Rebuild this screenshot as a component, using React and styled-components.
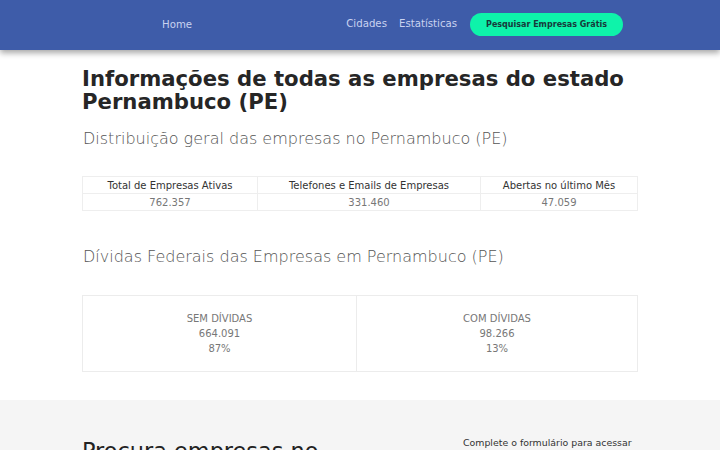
import React from "react";
import styled, { createGlobalStyle } from "styled-components";

const Global = createGlobalStyle`
  html, body { margin: 0; padding: 0; background: #fff; }
  body { font-family: "DejaVu Sans", sans-serif; color: #222; }
  * { box-sizing: border-box; }
`;

const Header = styled.header`
  height: 50px;
  background: #3e5ca9;
  box-shadow: 0 3px 6px rgba(0,0,0,0.35);
  display: flex;
  align-items: center;
  justify-content: space-between;
  padding: 0 97px 4px 162px;
  position: relative;
  z-index: 1;
`;

const NavLink = styled.a`
  color: #c9d3f0;
  font-size: 10.2px;
  text-decoration: none;
  margin-top: ${(p) => p.$mt || 0}px;
`;

const NavRight = styled.div`
  display: flex;
  align-items: center;
  gap: 12px;
`;

const CTA = styled.a`
  background: #0ef3aa;
  color: #173a3a;
  font-weight: bold;
  font-size: 8px;
  border-radius: 12px;
  height: 23px;
  padding: 0 16px;
  margin-left: 1px;
  display: flex;
  align-items: center;
  text-decoration: none;
  margin-top: 3px;
`;

const Main = styled.main`
  width: 556px;
  margin: 0 auto;
  padding-top: 17px;
`;

const Title = styled.h1`
  font-size: 21.2px;
  line-height: 23px;
  font-weight: bold;
  color: #262626;
  margin: 0;
`;

const Subtitle = styled.h2`
  font-size: 16px;
  font-weight: 200;
  color: #555;
  margin: ${(p) => p.$mt || 0}px 0 0 1px;
  line-height: 22px;
`;

const Table = styled.table`
  width: 100%;
  border-collapse: collapse;
  margin-top: 26px;
  font-size: 10px;
  text-align: center;
`;

const Th = styled.th`
  font-weight: normal;
  color: #333;
  border: 1px solid #eee;
  height: 17px;
  padding: 0;
`;

const Td = styled.td`
  color: #777;
  border: 1px solid #eee;
  height: 17px;
  padding: 0;
`;

const DebtGrid = styled.div`
  display: grid;
  grid-template-columns: 273px 1fr;
  border: 1px solid #ececec;
  margin-top: 27px;
  height: 77px;
`;

const DebtCell = styled.div`
  display: flex;
  flex-direction: column;
  align-items: center;
  justify-content: center;
  font-size: 10px;
  line-height: 15px;
  color: #777;
  & + & { border-left: 1px solid #ececec; }
`;

const Gray = styled.section`
  background: #f5f5f5;
  margin-top: 28px;
  height: 60px;
  overflow: hidden;
`;

const GrayInner = styled.div`
  width: 556px;
  margin: 0 auto;
  display: grid;
  grid-template-columns: 380px 1fr;
  padding-top: 37px;
`;

const BigHeading = styled.h2`
  font-size: 22.4px;
  font-weight: normal;
  color: #222;
  margin: 0;
  line-height: 28px;
`;

const SideText = styled.p`
  font-size: 9.4px;
  color: #333;
  margin: 0 0 0 1px;
`;

export default function App() {
  return (
    <>
      <Global />
      <Header>
        <NavLink $mt={2}>Home</NavLink>
        <NavRight>
          <NavLink>Cidades</NavLink>
          <NavLink>Estatísticas</NavLink>
          <CTA>Pesquisar Empresas Grátis</CTA>
        </NavRight>
      </Header>
      <Main>
        <Title>
          Informações de todas as empresas do estado
          <br />
          Pernambuco (PE)
        </Title>
        <Subtitle $mt={15}>Distribuição geral das empresas no Pernambuco (PE)</Subtitle>
        <Table>
          <thead>
            <tr>
              <Th style={{ width: 175 }}>Total de Empresas Ativas</Th>
              <Th style={{ width: 223 }}>Telefones e Emails de Empresas</Th>
              <Th>Abertas no último Mês</Th>
            </tr>
          </thead>
          <tbody>
            <tr>
              <Td>762.357</Td>
              <Td>331.460</Td>
              <Td>47.059</Td>
            </tr>
          </tbody>
        </Table>
        <Subtitle $mt={35}>Dívidas Federais das Empresas em Pernambuco (PE)</Subtitle>
        <DebtGrid>
          <DebtCell>
            <span>SEM DÍVIDAS</span>
            <span>664.091</span>
            <span>87%</span>
          </DebtCell>
          <DebtCell>
            <span>COM DÍVIDAS</span>
            <span>98.266</span>
            <span>13%</span>
          </DebtCell>
        </DebtGrid>
      </Main>
      <Gray>
        <GrayInner>
          <BigHeading>Procura empresas no</BigHeading>
          <SideText>Complete o formulário para acessar</SideText>
        </GrayInner>
      </Gray>
    </>
  );
}
